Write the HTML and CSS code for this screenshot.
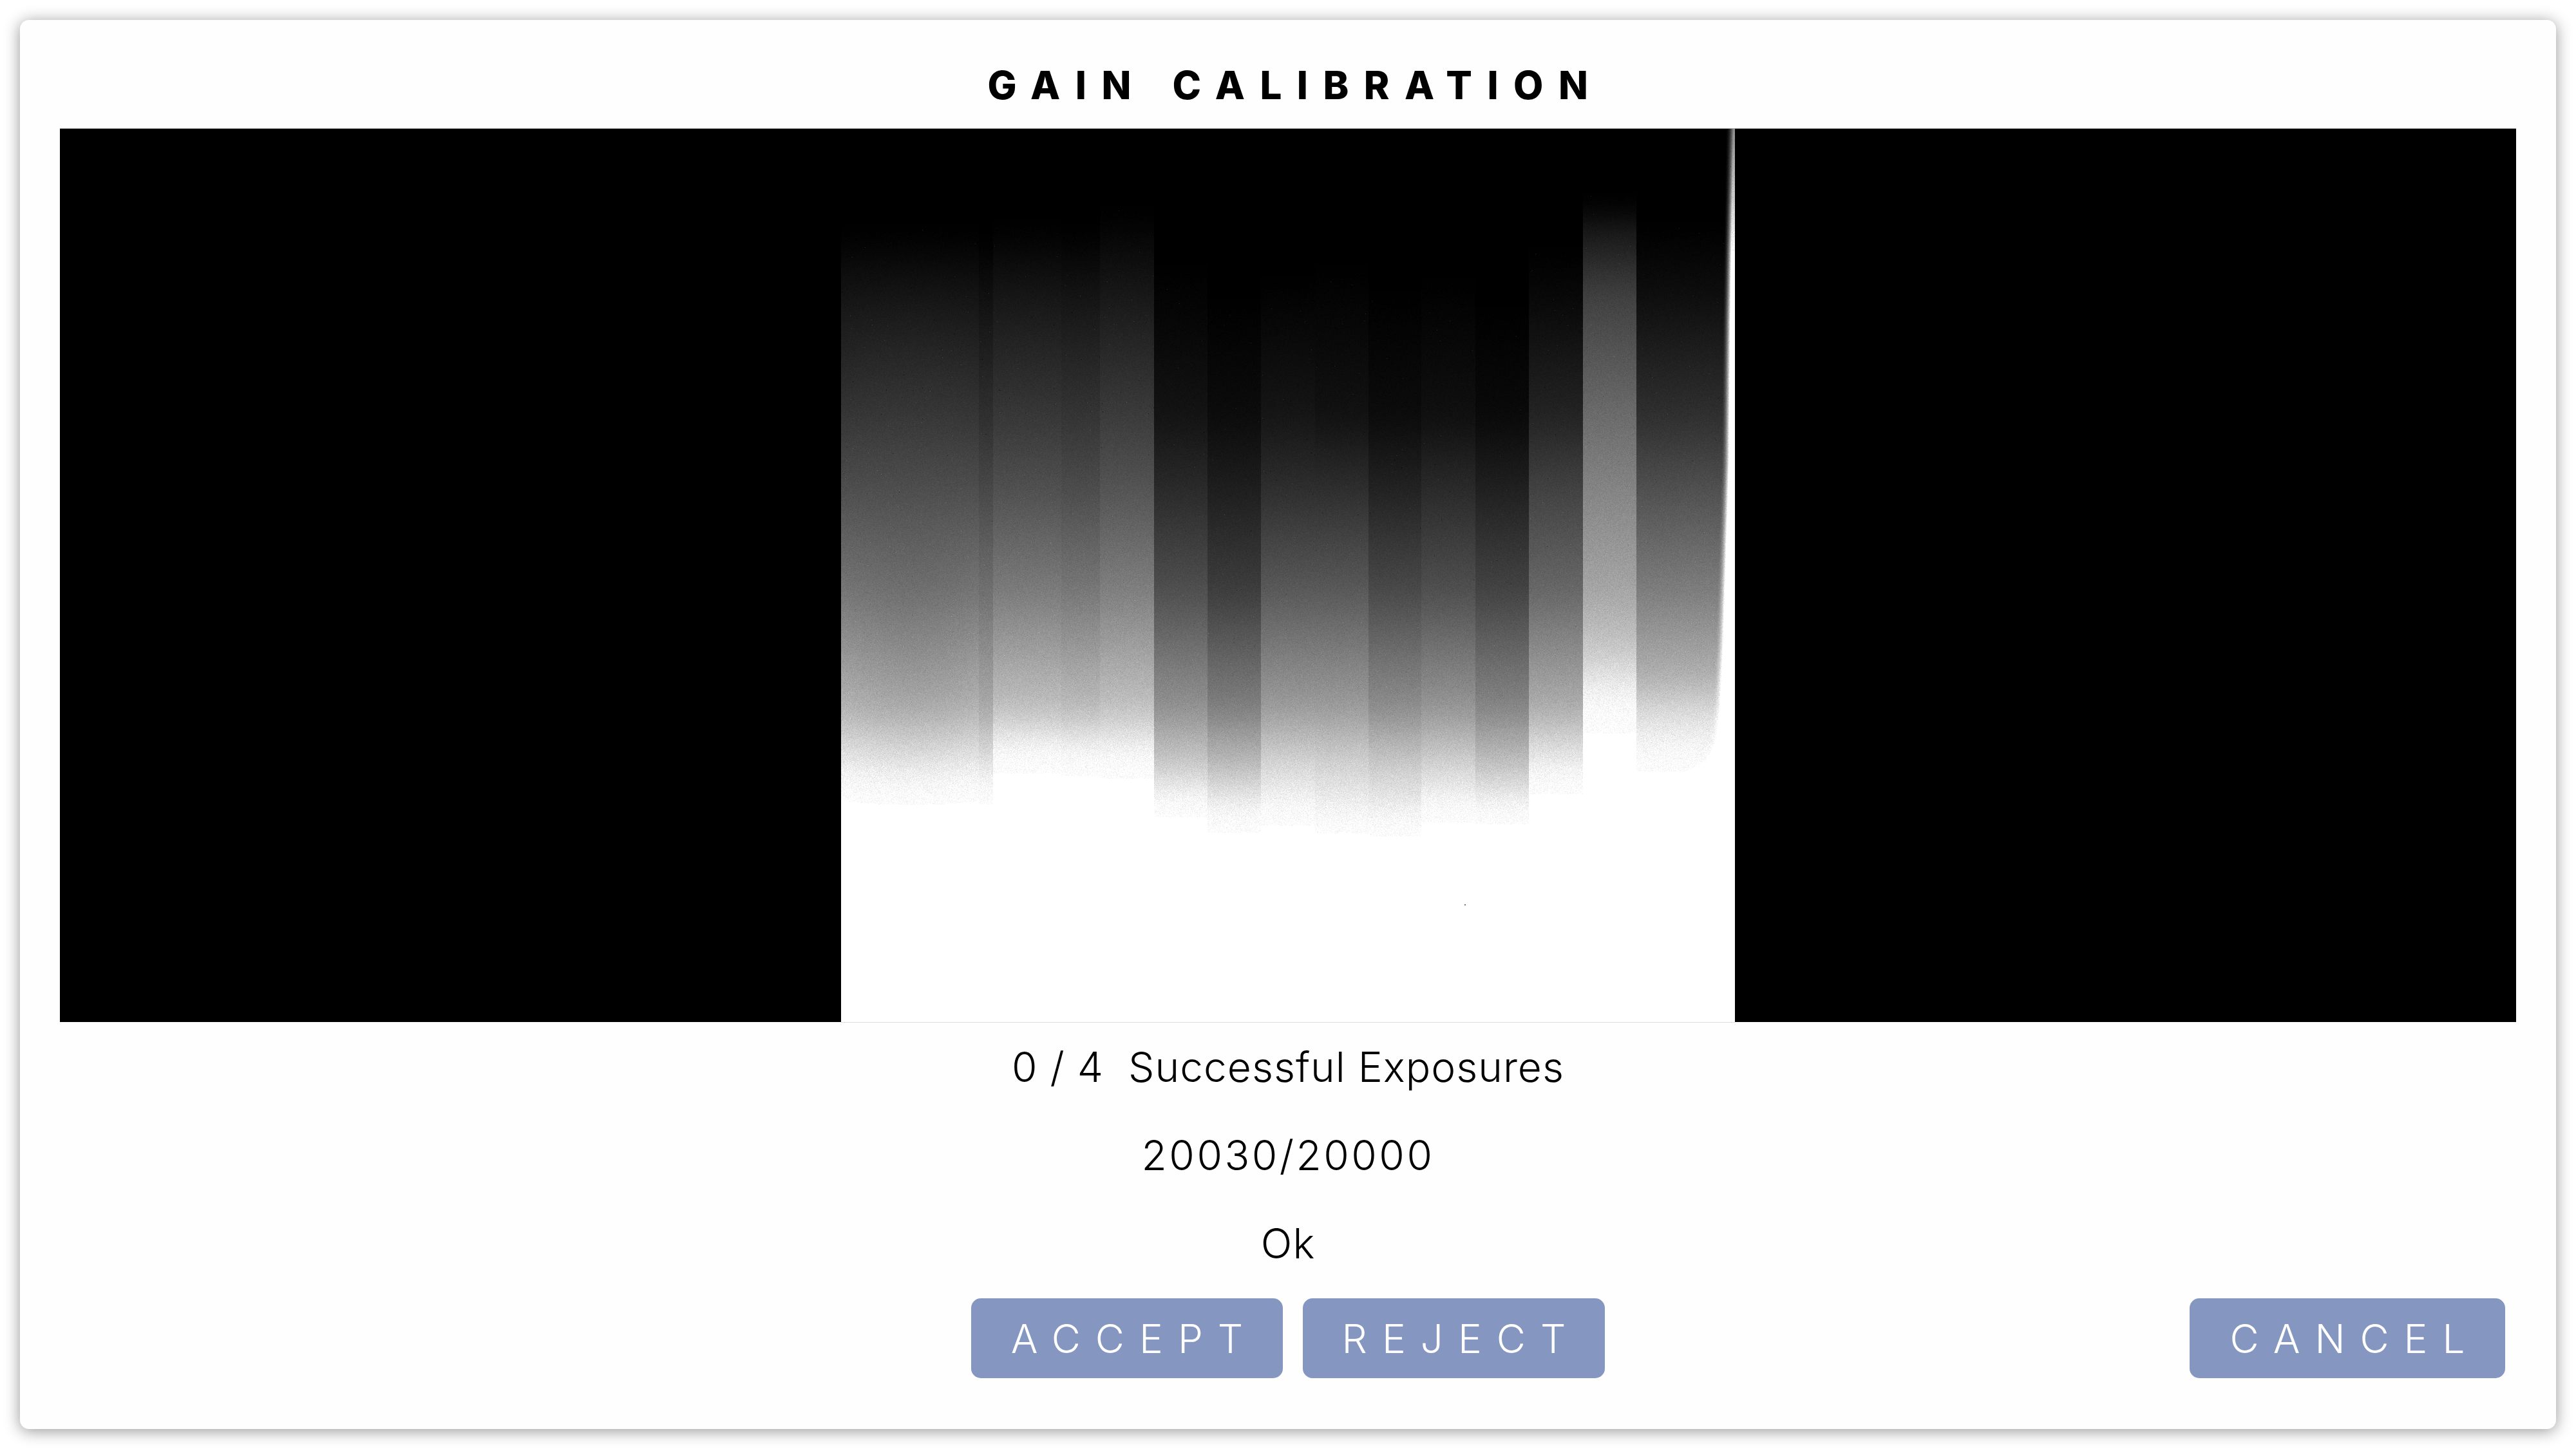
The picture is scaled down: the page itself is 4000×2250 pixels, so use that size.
FILE: index.html
```html
<!DOCTYPE html>
<html lang="en">

<head>
  <meta charset="UTF-8" />
  <meta name="viewport" content="width=device-width, initial-scale=1.0" />
  <title>Gain Calibration</title>
  <link rel="stylesheet" href="styles.css">
</head>

<body>
  <div class="dialog">
    <h2 class="dialog-title">GAIN CALIBRATION</h2>

    <div class="viewer">
      <canvas id="exposure" width="1388" height="1387"></canvas>
    </div>

    <div class="status">
      <p>0 / 4&nbsp; Successful Exposures</p>
      <p class="status-count">20030/20000</p>
      <p>Ok</p>
    </div>

    <div class="actions">
      <div class="actions-center">
        <button type="button" class="btn btn-accept">ACCEPT</button>
        <button type="button" class="btn btn-reject">REJECT</button>
      </div>
      <button type="button" class="btn btn-cancel">CANCEL</button>
    </div>
  </div>

  <script src="app.js"></script>
</body>

</html>
```

FILE: styles.css
```css
* {
  box-sizing: border-box;
  margin: 0;
  padding: 0;
}

body {
  font-family: Inter, "Liberation Sans", sans-serif;
  background: #fff;
  color: #000;
  padding: 31px;
}

.dialog {
  background: #fefefe;
  border-radius: 14px;
  box-shadow: 0 3px 24px rgba(0, 0, 0, 0.42);
  padding: 62px 62px 79px;
}

.dialog-title {
  font-size: 60px;
  font-weight: 800;
  letter-spacing: 23.5px;
  word-spacing: 4px;
  line-height: 78px;
  text-align: center;
  padding-left: 23px;
  margin-bottom: 29px;
}

.viewer {
  display: flex;
  justify-content: center;
  background: #000;
  height: 1387px;
  box-shadow: 0 -1px 0 #aaa;
}

#exposure {
  display: block;
  width: 1388px;
  height: 1387px;
  box-shadow: 0 1px 0 #ddd;
}

.status {
  text-align: center;
  font-size: 64px;
  font-weight: 300;
  letter-spacing: 1px;
  line-height: 137px;
  margin-bottom: 17px;
  padding-top: 1px;
}

.status-count {
  letter-spacing: 3.5px;
}

.actions {
  display: grid;
  grid-template-columns: 1fr auto 1fr;
  align-items: center;
}

.actions-center {
  grid-column: 2;
  display: flex;
  gap: 31px;
}

.btn {
  height: 124px;
  border: none;
  border-radius: 15px;
  background: #8597c0;
  color: #fff;
  font-family: Inter, "Liberation Sans", sans-serif;
  font-size: 62px;
  font-weight: 300;
  letter-spacing: 23px;
  padding-left: 23px;
  cursor: pointer;
}

.btn-accept {
  width: 484px;
}

.btn-reject {
  width: 469px;
}

.btn-cancel {
  grid-column: 3;
  justify-self: end;
  width: 490px;
  margin-right: 17px;
}
```

FILE: app.js
```js
// Simulated flat-field exposure: vertical detector strips, each a ramp from black to white.
// Each strip: [left x, right x, [y, gray] stops], in page pixels.
const OX = 1306, OY = 200;

const strips = [
  [1306, 1520, [[360, 0], [460, 20], [650, 54], [760, 78], [920, 118], [1100, 180], [1180, 232], [1225, 255]]],
  [1520, 1542, [[375, 0], [460, 16], [650, 48], [760, 72], [920, 112], [1100, 170], [1180, 224], [1230, 255]]],
  [1542, 1648, [[350, 0], [460, 22], [650, 56], [760, 80], [920, 124], [1100, 192], [1160, 245], [1185, 255]]],
  [1648, 1708, [[360, 0], [460, 20], [650, 53], [760, 76], [920, 120], [1100, 188], [1160, 241], [1188, 255]]],
  [1708, 1792, [[330, 0], [460, 24], [650, 60], [760, 84], [920, 128], [1100, 194], [1170, 248], [1195, 255]]],
  [1792, 1875, [[410, 0], [520, 8], [650, 20], [760, 42], [920, 80], [1100, 146], [1190, 205], [1235, 245], [1250, 255]]],
  [1875, 1958, [[460, 0], [650, 12], [760, 30], [920, 62], [1100, 128], [1190, 190], [1245, 238], [1275, 255]]],
  [1958, 2042, [[430, 0], [650, 22], [760, 46], [920, 90], [1100, 156], [1190, 216], [1250, 248], [1265, 255]]],
  [2042, 2125, [[410, 0], [650, 18], [760, 46], [920, 90], [1100, 156], [1190, 212], [1260, 245], [1275, 255]]],
  [2125, 2207, [[450, 0], [650, 12], [760, 34], [920, 74], [1100, 142], [1190, 204], [1260, 242], [1280, 255]]],
  [2207, 2291, [[430, 0], [650, 16], [760, 42], [920, 80], [1100, 150], [1190, 212], [1240, 245], [1260, 255]]],
  [2291, 2374, [[470, 0], [650, 10], [760, 32], [920, 68], [1100, 134], [1190, 196], [1240, 238], [1260, 255]]],
  [2374, 2458, [[390, 0], [460, 8], [650, 36], [760, 66], [920, 104], [1100, 174], [1185, 238], [1215, 255]]],
  [2458, 2541, [[318, 0], [345, 18], [460, 64], [650, 108], [760, 132], [920, 166], [1000, 196], [1085, 248], [1130, 255]]],
  [2541, 2694, [[350, 0], [460, 14], [650, 48], [760, 80], [920, 126], [1050, 176], [1110, 222], [1165, 250], [1185, 255]]]
];

// Where the bright right edge starts at each row
const edgeStops = [[200, 2691], [500, 2686], [720, 2684], [1000, 2675], [1100, 2670], [1150, 2664], [1180, 2650], [1200, 2620]];

function lerpStops(stops, y) {
  if (y <= stops[0][0]) return stops[0][1];
  for (let i = 1; i < stops.length; i++) {
    if (y <= stops[i][0]) {
      const a = stops[i - 1], b = stops[i];
      return a[1] + (b[1] - a[1]) * (y - a[0]) / (b[0] - a[0]);
    }
  }
  return stops[stops.length - 1][1];
}

// Box blur of the stops so the ramps have no kinks
function smoothAt(stops, y) {
  let sum = 0;
  for (let k = -25; k <= 25; k += 5) sum += lerpStops(stops, y + k);
  return sum / 11;
}

// Small seeded generator so the grain is the same on every load
let seed = 20030;
function rand() {
  seed = (seed * 1664525 + 1013904223) >>> 0;
  return seed / 4294967296;
}

function grain() {
  return (rand() + rand() + rand() - 1.5) * 1.6;
}

function draw() {
  const canvas = document.getElementById('exposure');
  const ctx = canvas.getContext('2d');
  const w = canvas.width, h = canvas.height;
  const img = ctx.createImageData(w, h);
  const px = img.data;

  for (let row = 0; row < h; row++) {
    const y = OY + row;
    const columns = strips.map(s => smoothAt(s[2], y));
    const edge = lerpStops(edgeStops, y);
    const edgeMax = Math.min(255, 140 + (y - 200) * 0.6);

    for (let col = 0; col < w; col++) {
      const x = OX + col;
      let i = 0;
      while (i < strips.length - 1 && x >= strips[i][1]) i++;
      let g = columns[i];

      // left blotches
      if (i === 0 && g > 0 && g < 255) {
        g *= 1 + 0.06 * Math.sin((x - 1306) / 70) * Math.cos((y - 500) / 160);
      }

      // right edge glow
      const d = edge - x;
      if (d < 12) {
        const t = Math.min(1, (12 - d) / 12);
        g = Math.max(g, g + (edgeMax - g) * t * t);
      }

      // grain, stronger in the mid tones, none in the saturated area
      if (g > 1 && g < 254.5) {
        g += grain() * (1.5 + g / 28);
        if (rand() < 0.0006) g += rand() < 0.6 ? 34 : -34;
      }
      g = Math.max(0, Math.min(255, g));

      const p = (row * w + col) * 4;
      px[p] = px[p + 1] = px[p + 2] = g;
      px[p + 3] = 255;
    }
  }

  ctx.putImageData(img, 0, 0);

  // dead pixel in the white area
  ctx.fillStyle = '#777';
  ctx.fillRect(2274 - OX, 1404 - OY, 2, 2);
}

draw();
```
